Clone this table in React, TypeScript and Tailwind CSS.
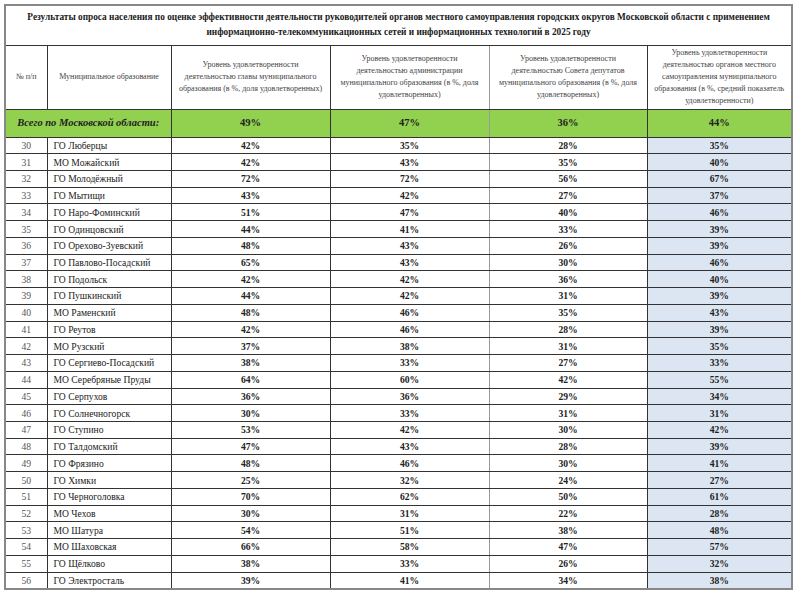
import React from 'react';

const rows: [number, string, string, string, string, string][] = [
  [30, 'ГО Люберцы', '42%', '35%', '28%', '35%'],
  [31, 'МО Можайский', '42%', '43%', '35%', '40%'],
  [32, 'ГО Молодёжный', '72%', '72%', '56%', '67%'],
  [33, 'ГО Мытищи', '43%', '42%', '27%', '37%'],
  [34, 'ГО Наро-Фоминский', '51%', '47%', '40%', '46%'],
  [35, 'ГО Одинцовский', '44%', '41%', '33%', '39%'],
  [36, 'ГО Орехово-Зуевский', '48%', '43%', '26%', '39%'],
  [37, 'ГО Павлово-Посадский', '65%', '43%', '30%', '46%'],
  [38, 'ГО Подольск', '42%', '42%', '36%', '40%'],
  [39, 'ГО Пушкинский', '44%', '42%', '31%', '39%'],
  [40, 'МО Раменский', '48%', '46%', '35%', '43%'],
  [41, 'ГО Реутов', '42%', '46%', '28%', '39%'],
  [42, 'МО Рузский', '37%', '38%', '31%', '35%'],
  [43, 'ГО Сергиево-Посадский', '38%', '33%', '27%', '33%'],
  [44, 'МО Серебряные Пруды', '64%', '60%', '42%', '55%'],
  [45, 'ГО Серпухов', '36%', '36%', '29%', '34%'],
  [46, 'ГО Солнечногорск', '30%', '33%', '31%', '31%'],
  [47, 'ГО Ступино', '53%', '42%', '30%', '42%'],
  [48, 'ГО Талдомский', '47%', '43%', '28%', '39%'],
  [49, 'ГО Фрязино', '48%', '46%', '30%', '41%'],
  [50, 'ГО Химки', '25%', '32%', '24%', '27%'],
  [51, 'ГО Черноголовка', '70%', '62%', '50%', '61%'],
  [52, 'МО Чехов', '30%', '31%', '22%', '28%'],
  [53, 'МО Шатура', '54%', '51%', '38%', '48%'],
  [54, 'МО Шаховская', '66%', '58%', '47%', '57%'],
  [55, 'ГО Щёлково', '38%', '33%', '26%', '32%'],
  [56, 'ГО Электросталь', '39%', '41%', '34%', '38%'],
];

const headers = [
  'Уровень удовлетворенности деятельностью главы муниципального образования (в %, доля удовлетворенных)',
  'Уровень удовлетворенности деятельностью администрации муниципального образования (в %, доля удовлетворенных)',
  'Уровень удовлетворенности деятельностью Совета депутатов муниципального образования (в %, доля удовлетворенных)',
  'Уровень удовлетворенности деятельностью органов местного самоуправления муниципального образования (в %, средний показатель удовлетворенности)',
];

export default function App() {
  return (
    <div className="w-[800px] h-[600px] bg-white pt-[4px] pl-[4px] font-['Liberation_Serif'] text-[#222]">
      <table className="table-fixed border-collapse w-[787px] border-2 border-[#888] font-['Liberation_Serif'] text-[#222]">
        <colgroup>
          <col className="w-[42px]" />
          <col className="w-[124px]" />
          <col className="w-[159px]" />
          <col className="w-[159px]" />
          <col className="w-[158px]" />
          <col className="w-[145px]" />
        </colgroup>
        <tbody>
          <tr className="h-[40px]">
            <td colSpan={6} className="border border-[#333] px-1 text-center text-[9.3px] font-bold leading-[15px] text-[#1a1a1a] whitespace-nowrap">
              Результаты опроса населения по оценке эффективности деятельности руководителей органов местного самоуправления городских округов Московской области с применением
              <br />
              информационно-телекоммуникационных сетей и информационных технологий в 2025 году
            </td>
          </tr>
          <tr className="h-[64px] text-[8px] leading-[12px] text-[#444]">
            <td className="border border-[#333] text-center">№ п/п</td>
            <td className="border border-[#333] text-center">Муниципальное образование</td>
            {headers.map((h, i) => (
              <td key={i} className={`border border-[#333] text-center px-[6px] ${i === 1 ? 'border-r-[#999]' : ''}`}>{h}</td>
            ))}
          </tr>
          <tr className="h-[28px] bg-[#92d050] text-[10.5px] font-bold">
            <td colSpan={2} className="border border-[#333] text-center italic">Всего по Московской области:</td>
            <td className="border border-[#333] text-center">49%</td>
            <td className="border border-[#333] border-r-[#999] text-center">47%</td>
            <td className="border border-[#333] text-center">36%</td>
            <td className="border border-[#333] text-center">44%</td>
          </tr>
          {rows.map((r) => (
            <tr key={r[0]} className="h-[16.74px] text-[9.6px] leading-[11px]">
              <td className="border border-[#333] text-center text-[#555]">{r[0]}</td>
              <td className="border border-[#333] px-[6px] whitespace-nowrap">{r[1]}</td>
              <td className="border border-[#333] text-center font-bold">{r[2]}</td>
              <td className="border border-[#333] border-r-[#999] text-center font-bold">{r[3]}</td>
              <td className="border border-[#333] text-center font-bold">{r[4]}</td>
              <td className="border border-[#333] bg-[#dce6f2] text-center font-bold">{r[5]}</td>
            </tr>
          ))}
        </tbody>
      </table>
    </div>
  );
}
